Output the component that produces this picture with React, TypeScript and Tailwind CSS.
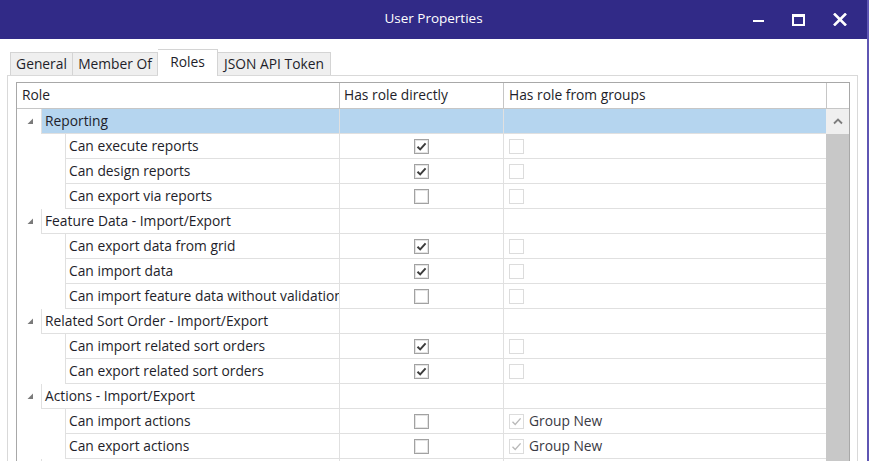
import React from "react";

type Row =
  | { kind: "group"; label: string; selected?: boolean }
  | { kind: "child"; label: string; direct: boolean; group: boolean; groupLabel?: string };

const rows: Row[] = [
  { kind: "group", label: "Reporting", selected: true },
  { kind: "child", label: "Can execute reports", direct: true, group: false },
  { kind: "child", label: "Can design reports", direct: true, group: false },
  { kind: "child", label: "Can export via reports", direct: false, group: false },
  { kind: "group", label: "Feature Data - Import/Export" },
  { kind: "child", label: "Can export data from grid", direct: true, group: false },
  { kind: "child", label: "Can import data", direct: true, group: false },
  { kind: "child", label: "Can import feature data without validation", direct: false, group: false },
  { kind: "group", label: "Related Sort Order - Import/Export" },
  { kind: "child", label: "Can import related sort orders", direct: true, group: false },
  { kind: "child", label: "Can export related sort orders", direct: true, group: false },
  { kind: "group", label: "Actions - Import/Export" },
  { kind: "child", label: "Can import actions", direct: false, group: true, groupLabel: "Group New" },
  { kind: "child", label: "Can export actions", direct: false, group: true, groupLabel: "Group New" },
  { kind: "group", label: "" },
];

const font = { fontFamily: '"Open Sans", "Noto Sans", sans-serif' };

function Check({ checked, disabled }: { checked: boolean; disabled?: boolean }) {
  return (
    <div
      className={
        "w-[15px] h-[15px] flex items-center justify-center bg-white " +
        (disabled ? "border border-[#dcdcdc]" : "border border-[#a2a2a2] shadow-[inset_0_0_0_1px_#e4e4e4]")
      }
    >
      {checked && (
        <svg width="11" height="11" viewBox="0 0 11 11">
          <path
            d="M1.5 5.8 L4.2 8.4 L9.6 2.4"
            fill="none"
            stroke={disabled ? "#b9b9b9" : "#3c3c3c"}
            strokeWidth={disabled ? 1.4 : 2}
          />
        </svg>
      )}
    </div>
  );
}

function Triangle() {
  return (
    <svg width="7" height="7" viewBox="0 0 7 7">
      <polygon points="6,0.5 6,6 0.5,6" fill="#7a7a7a" />
    </svg>
  );
}

export default function App() {
  return (
    <div
      className="w-[869px] h-[461px] overflow-hidden bg-white flex flex-col border-r-2 border-[#5f56b3] text-[13.8px] text-[#1e1e2a]"
      style={font}
    >
      {/* Title bar */}
      <div className="h-[39px] shrink-0 bg-[#312a87] flex items-center relative">
        <div className="flex-1 text-center text-white text-[13.5px] pb-[2px]">User Properties</div>
        <div className="absolute right-[20px] top-0 h-[39px] flex items-center gap-[28px]">
          <div className="w-[11px] h-[2.5px] bg-white mt-[3px]" />
          <div className="w-[13px] h-[12px] border-2 border-white border-t-[3px]" />
          <svg width="14" height="13" viewBox="0 0 14 13">
            <path d="M1 0.5 L13 12.5 M13 0.5 L1 12.5" stroke="white" strokeWidth="2.6" />
          </svg>
        </div>
      </div>

      {/* Body */}
      <div className="flex-1 flex flex-col pt-[10px]">
        {/* Tabs */}
        <div className="flex items-end pl-[10px] h-[26px] relative z-10">
          <div className="w-[63px] h-[23px] border-l border-t border-r border-[#d4d4d4] bg-[#efefef] flex items-center justify-center">
            General
          </div>
          <div className="w-[85px] h-[23px] border-t border-r border-[#d4d4d4] bg-[#efefef] flex items-center justify-center">
            Member Of
          </div>
          <div className="w-[60px] h-[27px] -mb-px border-t border-r border-[#d4d4d4] bg-white flex items-start justify-center pt-[2px]">
            Roles
          </div>
          <div className="w-[113px] h-[23px] border-t border-r border-[#d4d4d4] bg-[#efefef] flex items-center justify-center">
            JSON API Token
          </div>
        </div>

        {/* Panel */}
        <div className="ml-[7px] w-[851px] flex-1 border-l border-t border-r border-[#d9d9d9] pt-[6px] pl-[8px]">
          {/* Grid */}
          <div className="w-[834px] border border-[#a8a8a8] bg-white">
            {/* Header */}
            <div className="flex h-[26px] border-b border-[#c6c6c6]">
              <div className="w-[323px] border-r border-[#c6c6c6] pl-[5px] flex items-center">Role</div>
              <div className="w-[164px] border-r border-[#c6c6c6] pl-[4px] flex items-center">Has role directly</div>
              <div className="w-[323px] border-r border-[#c6c6c6] pl-[5px] flex items-center">Has role from groups</div>
              <div className="flex-1" />
            </div>

            {/* Body */}
            <div className="flex">
              <div className="w-[809px] flex flex-col">
                {rows.map((r, i) =>
                  r.kind === "group" ? (
                    <div key={i} className="flex h-[25px]">
                      <div className="w-[24px] flex items-center justify-center pl-[3px]">
                        {r.label && <Triangle />}
                      </div>
                      <div
                        className={
                          "flex-1 flex border-l border-b border-t-0 " +
                          (r.label ? "border-[#e0e0e0] " : "border-[#e0e0e0] ") +
                          (r.selected ? "bg-[#b5d5ef]" : "")
                        }
                      >
                        <div className="w-[298px] border-r border-[#e0e0e0] pl-[3px] flex items-center whitespace-nowrap overflow-hidden">
                          {r.label}
                        </div>
                        <div className="w-[164px] border-r border-[#e0e0e0]" />
                        <div className="flex-1" />
                      </div>
                    </div>
                  ) : (
                    <div key={i} className="flex h-[25px]">
                      <div className="w-[48px]" />
                      <div className="flex-1 flex border-l border-b border-[#e0e0e0]">
                        <div className="w-[274px] border-r border-[#e0e0e0] pl-[3px] flex items-center whitespace-nowrap overflow-hidden">
                          {r.label}
                        </div>
                        <div className="w-[164px] border-r border-[#e0e0e0] flex items-center justify-center">
                          <Check checked={r.direct} />
                        </div>
                        <div className="flex-1 flex items-center pl-[5px] gap-[5px]">
                          <Check checked={r.group} disabled />
                          {r.groupLabel && <span className="text-[#3a3a44]">{r.groupLabel}</span>}
                        </div>
                      </div>
                    </div>
                  )
                )}
              </div>
              {/* Scrollbar */}
              <div className="flex-1 flex flex-col">
                <div className="h-[25px] bg-[#efefef] flex items-center justify-center">
                  <svg width="10" height="7" viewBox="0 0 10 7">
                    <path d="M1 5.5 L5 1.5 L9 5.5" fill="none" stroke="#7d7d7d" strokeWidth="1.8" />
                  </svg>
                </div>
                <div className="flex-1 bg-[#c8c8c8]" />
              </div>
            </div>
          </div>
        </div>
      </div>
    </div>
  );
}
